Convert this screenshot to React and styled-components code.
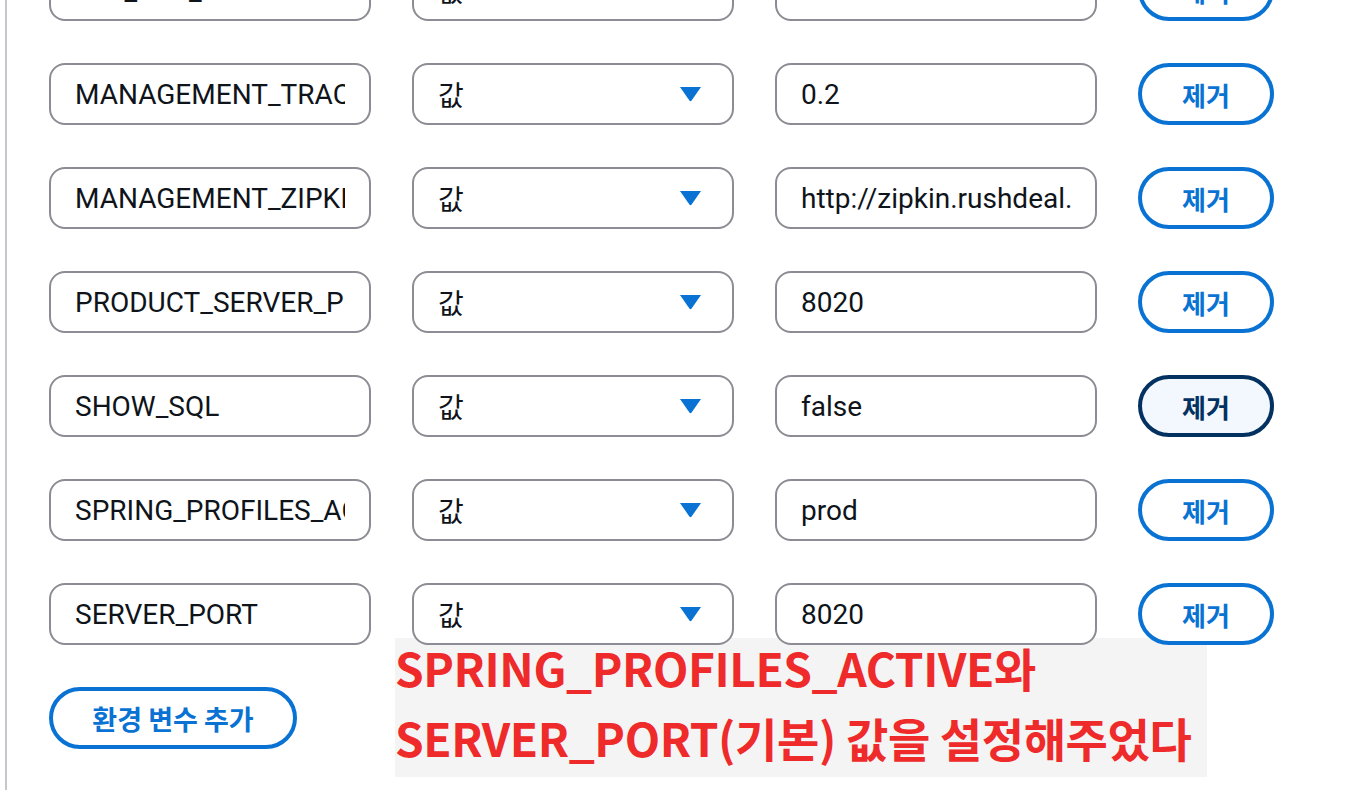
import React from 'react'
import styled, { createGlobalStyle } from 'styled-components'

const GlobalStyle = createGlobalStyle`
html, body {
  margin: 0;
  padding: 0;
  background: #ffffff;
  overflow: hidden;
}
body {
  font-family: Roboto, "Noto Sans CJK KR", sans-serif;
}
`

const Page = styled.div`
position: relative;
width: 1360px;
height: 790px;
overflow: hidden;
background: #fff;
`

const Rail = styled.div`
position: absolute;
left: 5px;
top: 0;
bottom: 0;
width: 2px;
background: #c6c6cd;
`

const List = styled.div`
position: relative;
z-index: 1;
display: flex;
flex-direction: column;
gap: 42px;
margin-top: -41px;
padding-left: 49px;
`

const Row = styled.div`
display: grid;
grid-template-columns: 322px 322px 322px 136px;
column-gap: 41px;
height: 62px;
`

const Field = styled.div`
box-sizing: border-box;
height: 62px;
border: 2px solid #8c8c94;
border-radius: 16px;
background: #fff;
padding: 0 24px;
display: flex;
align-items: center;
font-size: 28px;
color: #0f141a;
`

const FieldText = styled.span`
flex: 1;
min-width: 0;
white-space: nowrap;
overflow: hidden;
`

const SelectBox = styled(Field)`
justify-content: space-between;
padding-right: 30px;
`

const Caret = styled.svg`
width: 23px;
height: 16px;
flex: none;
`

const PillButton = styled.button`
box-sizing: border-box;
height: 62px;
border-radius: 31px;
border: 4px solid ${({ $active }) => ($active ? '#033160' : '#0972d3')};
background: ${({ $active }) => ($active ? '#f2f8fd' : '#ffffff')};
color: ${({ $active }) => ($active ? '#033160' : '#0972d3')};
font-family: "Noto Sans CJK KR", sans-serif;
font-weight: 700;
font-size: 26px;
padding: 0;
display: flex;
align-items: center;
justify-content: center;
`

const AddButton = styled(PillButton)`
width: 248px;
margin-top: 42px;
margin-left: 49px;
position: relative;
z-index: 1;
font-size: 27px;
`

const Note = styled.div`
position: absolute;
z-index: 0;
left: 395px;
top: 638px;
width: 812px;
height: 139px;
background: #f4f4f4;
color: #ee2a2a;
font-family: "Noto Sans CJK KR", sans-serif;
font-weight: 700;
font-size: 46px;
letter-spacing: -0.4px;
line-height: 70px;
white-space: nowrap;
overflow: hidden;
`

const NoteLines = styled.div`
margin-top: -6px;
`

const rows = [
  { name: 'JPA_DDL_AUTO', value: 'none' },
  { name: 'MANAGEMENT_TRACING_SAMPLING_PROBABILITY', value: '0.2' },
  { name: 'MANAGEMENT_ZIPKIN_TRACING_ENDPOINT', value: 'http://zipkin.rushdeal.com' },
  { name: 'PRODUCT_SERVER_PORT', value: '8020' },
  { name: 'SHOW_SQL', value: 'false', active: true },
  { name: 'SPRING_PROFILES_ACTIVE', value: 'prod' },
  { name: 'SERVER_PORT', value: '8020' },
]

const Triangle = () => (
  <Caret viewBox="0 0 23 16">
    <path d="M1 1 H22 L12.6 14.6 Q11.5 16 10.4 14.6 Z" fill="#0972d3" />
  </Caret>
)

export default function App() {
  return (
    <Page>
      <GlobalStyle />
      <Rail />
      <List>
        {rows.map(r => (
          <Row key={r.name}>
            <Field><FieldText>{r.name}</FieldText></Field>
            <SelectBox>
              <span>값</span>
              <Triangle />
            </SelectBox>
            <Field><FieldText>{r.value}</FieldText></Field>
            <PillButton $active={r.active}>제거</PillButton>
          </Row>
        ))}
      </List>
      <AddButton>환경 변수 추가</AddButton>
      <Note>
        <NoteLines>
          SPRING_PROFILES_ACTIVE와
          <br />
          SERVER_PORT(기본) 값을 설정해주었다
        </NoteLines>
      </Note>
    </Page>
  )
}
